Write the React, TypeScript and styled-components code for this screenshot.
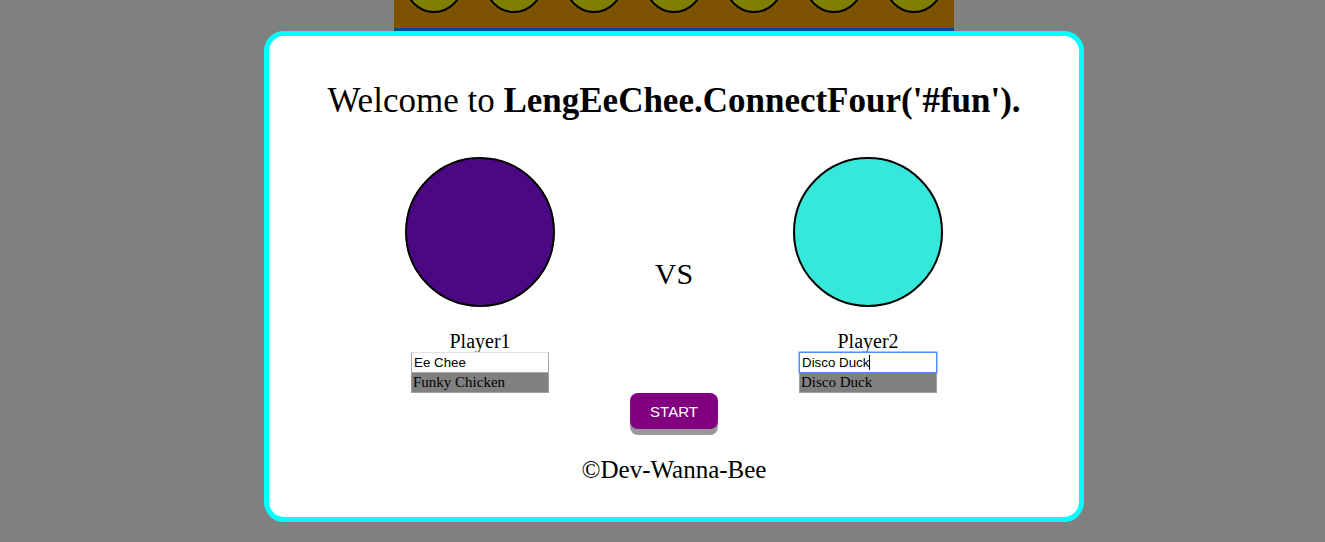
import React from "react";
import styled, { createGlobalStyle } from "styled-components";

const GlobalStyle = createGlobalStyle`
  html, body {
    margin: 0;
    padding: 0;
    background: #808080;
    overflow: hidden;
  }
  body {
    width: 1325px;
    height: 542px;
    font-family: "Liberation Serif", "Times New Roman", serif;
  }
`;

const Page = styled.div`
  position: relative;
  width: 1325px;
  height: 542px;
`;

const Board = styled.div`
  box-sizing: border-box;
  margin-left: 394px;
  width: 560px;
  height: 31px;
  background: #7d5200;
  border-bottom: 3px solid #004c8c;
  padding-bottom: 15px;
  display: flex;
  align-items: flex-end;
  overflow: hidden;
`;

const Cell = styled.div`
  flex: 0 0 80px;
  display: flex;
  justify-content: center;
`;

const Hole = styled.div`
  flex: 0 0 auto;
  box-sizing: border-box;
  width: 58px;
  height: 58px;
  border-radius: 50%;
  background: #7f7f00;
  border: 2px solid #000;
`;

const Modal = styled.div`
  position: absolute;
  left: 264px;
  top: 31px;
  box-sizing: border-box;
  width: 820px;
  height: 491px;
  background: #fff;
  border: 5px solid #00ffff;
  border-radius: 20px;
  display: flex;
  flex-direction: column;
  align-items: center;
  padding-top: 45px;
`;

const Title = styled.h1`
  margin: 0;
  font-size: 35px;
  font-weight: normal;
  line-height: 40px;
  color: #000;
  white-space: nowrap;
`;

const Players = styled.div`
  margin-top: 36px;
  display: grid;
  grid-template-columns: 194px 194px 194px;
`;

const PlayerCol = styled.div`
  display: flex;
  flex-direction: column;
  align-items: center;
`;

const Disc = styled.div<{ $color: string }>`
  box-sizing: border-box;
  width: 150px;
  height: 150px;
  border-radius: 50%;
  border: 2px solid #000;
  background: ${(p) => p.$color};
`;

const Label = styled.div`
  margin-top: 23px;
  font-size: 20px;
  line-height: 22px;
  height: 22px;
  color: #000;
`;

const Field = styled.div<{ $focused?: boolean }>`
  box-sizing: border-box;
  width: 138px;
  height: 21px;
  border: 1px solid ${(p) => (p.$focused ? "#4d90fe" : "#a9a9a9")};
  border-top-color: ${(p) => (p.$focused ? "#4d90fe" : "#e0e0e0")};
  ${(p) => (p.$focused ? "box-shadow: 0 0 0 0.5px #4d90fe;" : "")}
  padding: 0 2px;
  font-family: "Liberation Sans", Arial, sans-serif;
  font-size: 13.33px;
  line-height: 19px;
  color: #000;
  background: #fff;
  display: flex;
  align-items: center;
  white-space: nowrap;
`;

const Caret = styled.span`
  display: inline-block;
  width: 1px;
  height: 15px;
  background: #000;
`;

const Option = styled.div`
  box-sizing: border-box;
  width: 138px;
  height: 20px;
  background: #808080;
  border: 1px solid #a0a0a0;
  border-top: none;
  padding: 0 1px;
  font-size: 15px;
  line-height: 18px;
  color: #000;
  white-space: nowrap;
`;

const Versus = styled.div`
  padding-top: 100px;
  text-align: center;
  font-size: 30px;
  line-height: 34px;
  color: #000;
`;

const StartButton = styled.button`
  box-sizing: border-box;
  width: 88px;
  height: 36px;
  border: none;
  border-radius: 8px;
  background: #800080;
  color: #fff;
  font-family: "Liberation Sans", Arial, sans-serif;
  font-size: 15px;
  box-shadow: 0 6px #999;
  cursor: pointer;
  padding: 0;
`;

const Footer = styled.div`
  margin-top: 26px;
  font-size: 25px;
  line-height: 29px;
  color: #000;
`;

function Player({
  color,
  name,
  value,
  option,
  focused,
}: {
  color: string;
  name: string;
  value: string;
  option: string;
  focused?: boolean;
}) {
  return (
    <PlayerCol>
      <Disc $color={color} />
      <Label>{name}</Label>
      <Field $focused={focused}>
        {value}
        {focused && <Caret />}
      </Field>
      <Option>{option}</Option>
    </PlayerCol>
  );
}

export default function App() {
  return (
    <Page>
      <GlobalStyle />
      <Board>
        {Array.from({ length: 7 }).map((_, i) => (
          <Cell key={i}>
            <Hole />
          </Cell>
        ))}
      </Board>
      <Modal>
        <Title>
          Welcome to <b>LengEeChee.ConnectFour('#fun').</b>
        </Title>
        <Players>
          <Player color="#4b0882" name="Player1" value="Ee Chee" option="Funky Chicken" />
          <Versus>VS</Versus>
          <Player color="#35e8da" name="Player2" value="Disco Duck" option="Disco Duck" focused />
        </Players>
        <StartButton>START</StartButton>
        <Footer>©Dev-Wanna-Bee</Footer>
      </Modal>
    </Page>
  );
}
